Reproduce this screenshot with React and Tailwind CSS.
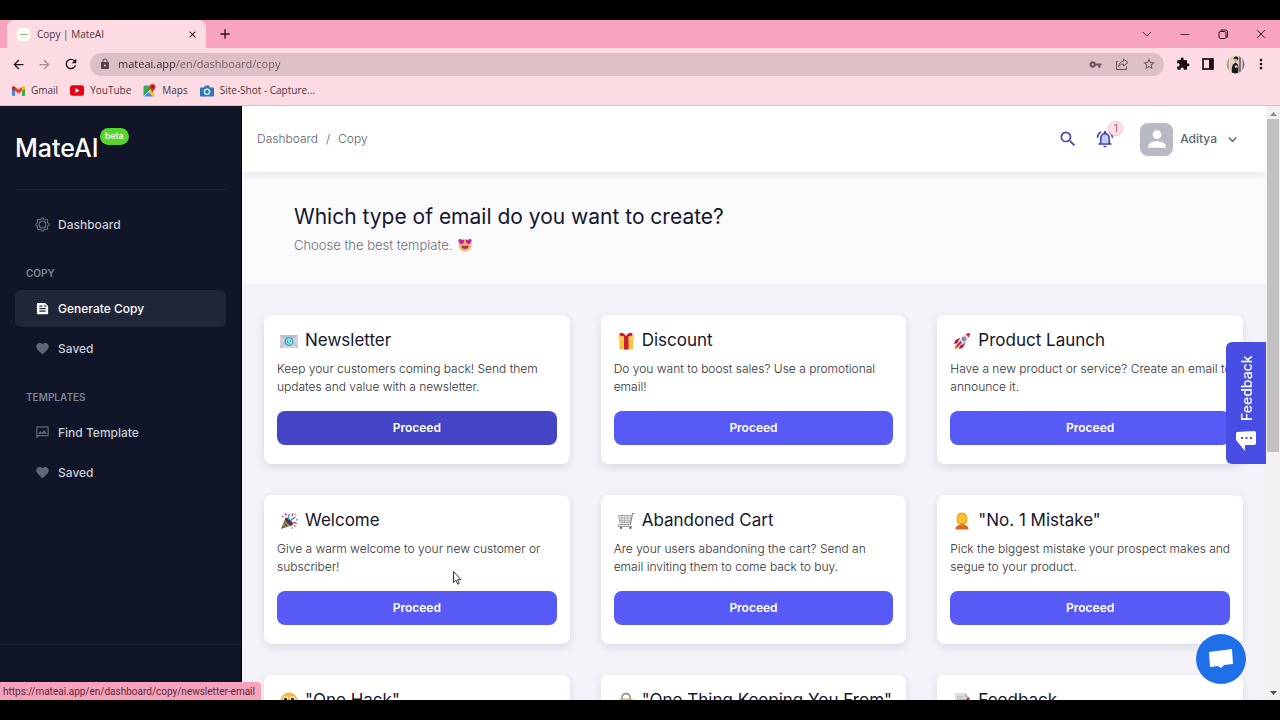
import React from "react";
import {
  MdArrowBack, MdArrowForward, MdRefresh, MdLock, MdVpnKey, MdStarBorder, MdExtension, MdMoreVert,
  MdFeed, MdFavorite, MdOutlineMms, MdSearch, MdPerson,
  MdKeyboardArrowDown, MdClose, MdAdd,
} from "react-icons/md";

/* ---------- Browser icons ---------- */

const GmailIcon = () => (
  <svg className="h-[10px] w-[13px]" viewBox="0 0 26 20" aria-hidden="true">
    <path d="M0 3v15a2 2 0 0 0 2 2h4V9z" fill="#4285f4" />
    <path d="M26 3v15a2 2 0 0 1-2 2h-4V9z" fill="#34a853" />
    <path d="M20 2v8l6-4V3.500c0-3-3-4-5-2.500z" fill="#fbbc04" />
    <path d="M6 10V2l7 5 7-5v8l-7 5z" fill="#ea4335" />
    <path d="M0 3.500V6l6 4V2L5 1C3-.500 0 .500 0 3.500z" fill="#c5221f" />
  </svg>
);

const YoutubeIcon = () => (
  <svg className="h-[11px] w-[14px]" viewBox="0 0 28 22" aria-hidden="true">
    <rect width="28" height="21" y="0.500" rx="5" fill="#e60012" />
    <path d="M11 6l8 5-8 5z" fill="#fff" />
  </svg>
);

const MapsIcon = () => (
  <svg className="size-[13px]" viewBox="0 0 26 26" aria-hidden="true">
    <rect x="1" y="3" width="22" height="22" rx="3" fill="#e8eaed" />
    <path d="M1 6a3 3 0 0 1 3-3h9L1 16z" fill="#34a853" />
    <path d="M1 16L13 3l3 6L1 24z" fill="#2f9e4f" />
    <path d="M2 25l9-9 9 9z" fill="#4285f4" />
    <path d="M11 16l4-4 8 9v4h-3z" fill="#fbbc04" />
    <path d="M19 0a6 6 0 0 0-6 6c0 5 5 6 6 12 1-6 6-7 6-12a6 6 0 0 0-6-6z" fill="#d93025" />
    <circle cx="19" cy="6" r="2.200" fill="#7b1711" />
  </svg>
);

const CameraIcon = () => (
  <svg className="h-[12px] w-[14px]" viewBox="0 0 28 24" aria-hidden="true">
    <path d="M2 5h6l2-4h8l2 4h6a2 2 0 0 1 2 2v14a2 2 0 0 1-2 2H2a2 2 0 0 1-2-2V7a2 2 0 0 1 2-2z" fill="#2f78b7" />
    <circle cx="14" cy="13.500" r="6.500" fill="#e7f1f8" />
    <circle cx="14" cy="13.500" r="3.800" fill="#2f78b7" />
  </svg>
);

const ShareIcon = () => (
  <svg className="size-[14px]" viewBox="0 0 28 28" fill="none" stroke="currentColor" strokeWidth="2" strokeLinejoin="round" aria-hidden="true">
    <path d="M6 9H3v16h20v-6" />
    <path d="M17 4l9 7-9 7v-4c-5 0-8 2-10 5 1-6 4-10 10-11z" />
  </svg>
);

const SidePanelIcon = () => (
  <svg className="size-[12px]" viewBox="0 0 12 12" aria-hidden="true">
    <rect x="1" y="1" width="10" height="10" fill="none" stroke="#1c1014" strokeWidth="1.700" />
    <rect x="7" y="1" width="4" height="10" fill="#1c1014" />
  </svg>
);

const ProfilePhoto = () => (
  <svg className="size-[19px]" viewBox="0 0 38 38" aria-hidden="true">
    <defs>
      <clipPath id="photo"><circle cx="19" cy="19" r="18" /></clipPath>
    </defs>
    <g clipPath="url(#photo)">
      <rect width="38" height="38" fill="#e2d3c2" />
      <rect x="26" width="12" height="38" fill="#85707a" />
      <rect x="30" width="3" height="38" fill="#e5dcd8" />
      <rect width="6" height="38" fill="#b9a391" />
      <path d="M12 38c-1-8-1-14 2-19l5-4 4 3c3 5 2 10 1 20z" fill="#1b1820" />
      <circle cx="20" cy="9" r="4.500" fill="#d3a78f" />
      <path d="M15 8c0-6 8-7 10-1l-1 3c-2-3-5-3-9-2z" fill="#18120f" />
      <path d="M17 22l5-2 2 5-5 1z" fill="#e6cbbd" />
    </g>
  </svg>
);

/* ---------- Dashboard icons ---------- */

const gearPath = Array.from({ length: 64 }, (_, i) => {
  const a = (i / 64) * Math.PI * 2;
  const r = 9.6 + Math.cos(a * 8) * 1.3;
  return `${i ? "L" : "M"}${(12 + r * Math.sin(a)).toFixed(2)} ${(12 - r * Math.cos(a)).toFixed(2)}`;
}).join("") + "Z";

const GearIcon = ({ className }) => (
  <svg className={className} viewBox="0 0 24 24" fill="none" stroke="currentColor" aria-hidden="true">
    <path d={gearPath} strokeWidth="1.900" strokeLinejoin="round" />
    <circle cx="12" cy="12" r="5.400" strokeWidth="2.200" />
  </svg>
);

const BellIcon = () => (
  <svg className="size-5" viewBox="0 0 24 24" aria-hidden="true">
    <path d="M12 6.500c-2.500 0-4 2-4 4.500v6h8v-6c0-2.500-1.500-4.500-4-4.500z" fill="#c3cdfb" />
    <path
      fill="currentColor"
      d="M12 22c1.100 0 2-.9 2-2h-4c0 1.100.9 2 2 2zm6-6v-5c0-3.070-1.630-5.640-4.500-6.320V4c0-.83-.67-1.500-1.500-1.500s-1.500.67-1.500 1.500v.68C7.640 5.360 6 7.920 6 11v5l-2 2v1h16v-1l-2-2zm-2 1H8v-6c0-2.480 1.510-4.500 4-4.500s4 2.020 4 4.500v6zM7.580 4.080L6.150 2.650C3.750 4.480 2.170 7.300 2.030 10.500h2c.15-2.650 1.510-4.970 3.550-6.420zm12.390 6.420h2c-.15-3.200-1.730-6.020-4.120-7.850l-1.420 1.430c2.020 1.450 3.390 3.770 3.540 6.420z"
    />
  </svg>
);

/* ---------- Emoji drawings ---------- */

const Emoji = ({ children, className = "size-[18px]" }) => (
  <svg className={`shrink-0 ${className}`} viewBox="0 0 36 36" aria-hidden="true">{children}</svg>
);

const HeartEyes = () => (
  <Emoji className="size-[14px]">
    <circle cx="18" cy="19" r="16" fill="#f7b072" />
    <path d="M1 5c2-4 7-3 8 0 3-3 8-1 7 4-1 4-4 6-7 7C4 14 0 10 1 5z" fill="#c8229a" />
    <path d="M35 5c-2-4-7-3-8 0-3-3-8-1-7 4 1 4 4 6 7 7 5-2 9-6 8-11z" fill="#c8229a" />
    <path d="M9 20h18c0 6-4 8-9 8s-9-2-9-8z" fill="#9a3a5e" />
  </Emoji>
);

const MailEmoji = () => (
  <Emoji>
    <rect x="0" y="6" width="36" height="26" fill="#d5cfe0" />
    <path d="M0 6l18 15L36 6z" fill="#bfb8d2" />
    <path d="M0 32l13-15M36 32L23 17" stroke="#aaa3bf" strokeWidth="1.500" />
    <circle cx="18" cy="19" r="9" fill="#27b3c4" />
    <circle cx="18" cy="19" r="5.500" fill="none" stroke="#b8eef0" strokeWidth="2" />
    <path d="M18 14v7h4" fill="none" stroke="#e9ffff" strokeWidth="2" />
  </Emoji>
);

const GiftEmoji = () => (
  <Emoji>
    <rect x="5" y="13" width="27" height="22" fill="#f8c33c" />
    <rect x="3" y="7" width="31" height="9" rx="1" fill="#fbd45c" />
    <rect x="14" y="8" width="9" height="27" fill="#c8202f" />
    <path d="M18 8C12-2 3 1 5 6c1 3 7 3 13 2zM18 8c6-10 15-7 13-2-1 3-7 3-13 2z" fill="#d92535" />
    <path d="M9 4l5 3M27 4l-5 3" stroke="#8f1422" strokeWidth="2" />
  </Emoji>
);

const RocketEmoji = () => (
  <Emoji>
    <path d="M14 11L4 17l-2 7 9-2zM25 22l-6 10-7 2 2-9z" fill="#b5214f" />
    <path d="M3 34c0-5 2-8 6-9l3 3c-1 4-4 6-9 6z" fill="#f28b3c" />
    <path d="M8 25C12 12 22 2 34 2c0 12-10 22-23 26z" fill="#e3dfe8" />
    <path d="M34 2c0 3-1 6-2 9l-7-7c3-1 6-2 9-2z" fill="#c6285a" />
    <path d="M8 25l3 3c8-2 14-6 18-12L13 27z" fill="#b9b3c4" />
    <circle cx="22" cy="14" r="3.800" fill="#8d93ab" stroke="#5a6078" strokeWidth="1.200" />
    <path d="M6 27l9-9 3 3-9 9z" fill="#c6285a" />
  </Emoji>
);

const PartyEmoji = () => (
  <Emoji>
    <path d="M11 12L2 34l23-8z" fill="#6b5a50" />
    <path d="M9 18l9 10M6 24l6 7M11 12l14 14" stroke="#c9a46a" strokeWidth="2.200" />
    <ellipse cx="18" cy="19" rx="4" ry="10" transform="rotate(-45 18 19)" fill="#4b3a44" />
    <path d="M17 16c-2-5 0-8 2-12M21 19c2-6 5-7 10-9" fill="none" stroke="#3b8fd0" strokeWidth="2.600" />
    <path d="M23 22c4-2 7-1 11 1" fill="none" stroke="#d0336b" strokeWidth="2.600" />
    <path d="M10 3l3 4M26 3l-2 5M4 8l3 2M31 29l-3-2" stroke="#cf3b8a" strokeWidth="3" />
    <path d="M32 16l3-1M23 31l2 2" stroke="#2fa4c9" strokeWidth="3" />
    <circle cx="31" cy="5" r="1.800" fill="#e0a030" />
  </Emoji>
);

const CartEmoji = () => (
  <Emoji>
    <path d="M35 3h-4l-4 22H6" fill="none" stroke="#8a8a90" strokeWidth="2.300" />
    <path d="M3 7h26l-3 14H6z" fill="#ededf0" stroke="#929299" strokeWidth="1.600" />
    <path d="M9 7l1 14M15 7v14M21 7l-1 14M4 12h24M5 17h22" stroke="#9d9da4" strokeWidth="1.300" />
    <path d="M5 25c-3 0-3 4 0 4h25" fill="none" stroke="#929299" strokeWidth="2.200" />
    <circle cx="8" cy="32" r="2.300" fill="#66666c" />
    <circle cx="27" cy="32" r="2.300" fill="#66666c" />
  </Emoji>
);

const PersonEmoji = () => (
  <Emoji>
    <path d="M5 35c0-7 5-10 13-10s13 3 13 10z" fill="#e2651f" />
    <path d="M18 1C9 1 7 8 7 15c0 5 2 8 5 10h12c3-2 5-5 5-10C29 8 27 1 18 1z" fill="#f3ac27" />
    <path d="M14 21h8v6c-2 3-6 3-8 0z" fill="#d98c1e" />
    <ellipse cx="18" cy="14" rx="7.500" ry="9" fill="#fac036" />
  </Emoji>
);

const FaceEmoji = () => (
  <Emoji>
    <circle cx="18" cy="18" r="17" fill="#f6b73c" />
    <ellipse cx="11" cy="14" rx="5" ry="5.500" fill="#fff" />
    <ellipse cx="25" cy="14" rx="5" ry="5.500" fill="#fff" />
    <circle cx="11" cy="14" r="3.200" fill="#3b2a20" />
    <circle cx="25" cy="14" r="3.200" fill="#3b2a20" />
    <path d="M10 27h16" stroke="#6b3c18" strokeWidth="2.500" />
  </Emoji>
);

const LockEmoji = () => (
  <Emoji>
    <path d="M10 18v-7a8 8 0 0 1 16 0v7" fill="none" stroke="#93939a" strokeWidth="3.500" />
    <rect x="4" y="13" width="28" height="21" rx="3" fill="#f6b73c" />
    <circle cx="18" cy="20" r="3" fill="#6b4a1c" />
    <path d="M18 21v7" stroke="#6b4a1c" strokeWidth="3" />
  </Emoji>
);

const NoteEmoji = () => (
  <Emoji>
    <path d="M4 2h20l7 8v25H4z" fill="#dcdbe1" />
    <path d="M24 2v8h7z" fill="#b4b3bd" />
    <path d="M8 10h12M8 15h17M8 20h12M8 25h10" stroke="#a5a4b0" strokeWidth="1.500" />
    <path d="M34 13l-4-3-12 15-1 6 6-2z" fill="#c92a4b" />
  </Emoji>
);

/* ---------- Data ---------- */

const cards = [
  { title: "Newsletter", icon: MailEmoji, text: "Keep your customers coming back! Send them updates and value with a newsletter.", hovered: true },
  { title: "Discount", icon: GiftEmoji, text: "Do you want to boost sales? Use a promotional email!" },
  { title: "Product Launch", icon: RocketEmoji, text: "Have a new product or service? Create an email to announce it." },
  { title: "Welcome", icon: PartyEmoji, text: "Give a warm welcome to your new customer or subscriber!" },
  { title: "Abandoned Cart", icon: CartEmoji, text: "Are your users abandoning the cart? Send an email inviting them to come back to buy." },
  { title: "\"No. 1 Mistake\"", icon: PersonEmoji, text: "Pick the biggest mistake your prospect makes and segue to your product." },
  { title: "\"One Hack\"", icon: FaceEmoji },
  { title: "\"One Thing Keeping You From\"", icon: LockEmoji },
  { title: "Feedback", icon: NoteEmoji },
];

const bookmarks = [
  { label: "Gmail", icon: GmailIcon },
  { label: "YouTube", icon: YoutubeIcon },
  { label: "Maps", icon: MapsIcon },
  { label: "Site-Shot - Capture...", icon: CameraIcon },
];

/* ---------- Browser frame ---------- */

function TabStrip() {
  return (
    <div className="flex h-7 shrink-0 items-stretch bg-[#f8a4c0] pl-[7px] text-[#2a1218]">
      <div className="flex w-[199px] items-center gap-[7px] rounded-t-lg bg-[#fcdbe2] pr-2 pl-[10px]">
        <span className="flex size-[13px] items-center justify-center rounded-sm bg-[#f6fdf3]">
          <span className="h-px w-2 bg-[#9bb59b]" />
        </span>
        <span className="flex-1 text-[10px] text-[#4a343b]">Copy | MateAI</span>
        <button aria-label="Close tab"><MdClose className="size-[11px]" /></button>
      </div>
      <button aria-label="New tab" className="ml-[11px]"><MdAdd className="size-4" /></button>
      <div className="ml-auto flex items-center gap-[26px] pr-[13px]">
        <button aria-label="Search tabs">
          <svg className="size-3" viewBox="0 0 12 12" fill="none" stroke="currentColor" strokeWidth="0.800"><path d="M2 4l4 4 4-4" /></svg>
        </button>
        <button aria-label="Minimize">
          <svg className="size-3" viewBox="0 0 12 12" fill="none" stroke="currentColor" strokeWidth="0.800"><path d="M1.500 6.500h9" /></svg>
        </button>
        <button aria-label="Restore">
          <svg className="size-3" viewBox="0 0 12 12" fill="none" stroke="currentColor"><rect x="2" y="3.500" width="7" height="7" rx="1.500" /><path d="M4 3.500V2h4.500a2 2 0 0 1 2 2v5H9" /></svg>
        </button>
        <button aria-label="Close window">
          <svg className="size-3" viewBox="0 0 12 12" fill="none" stroke="currentColor"><path d="M2 2l8 8M10 2l-8 8" /></svg>
        </button>
      </div>
    </div>
  );
}

function Toolbar() {
  return (
    <div className="flex h-8 shrink-0 items-center bg-[#fcdbe2] px-[11px] text-[#1c1014]">
      <div className="flex items-center gap-[11px]">
        <button aria-label="Back"><MdArrowBack className="size-[15px]" /></button>
        <button aria-label="Forward" className="text-[#a98790]"><MdArrowForward className="size-[15px]" /></button>
        <button aria-label="Reload"><MdRefresh className="size-4" /></button>
      </div>
      <div className="ml-[11px] flex h-[23px] flex-1 items-center rounded-full bg-[#dcc0c6] pr-2 pl-[9px] text-[#6b555b]">
        <MdLock className="size-3 text-[#55454a]" />
        <input
          aria-label="Address"
          readOnly
          value="mateai.app/en/dashboard/copy"
          className="ml-[7px] min-w-0 flex-1 bg-linear-to-r from-[#35282c] from-[58px] to-[#6f5c62] to-[58px] bg-clip-text text-[11px] text-transparent outline-none"
        />
        <div className="flex items-center gap-[13px]">
          <MdVpnKey className="size-[13px]" />
          <ShareIcon />
          <MdStarBorder className="size-[14px]" />
        </div>
      </div>
      <div className="ml-3 flex items-center gap-3">
        <MdExtension className="size-[14px]" />
        <SidePanelIcon />
        <ProfilePhoto />
        <button aria-label="Browser menu" className="-ml-1"><MdMoreVert className="size-4" /></button>
      </div>
    </div>
  );
}

function BookmarksBar() {
  return (
    <nav aria-label="Bookmarks" className="flex h-[26px] shrink-0 items-center gap-3 border-b border-[#d9bcc4] bg-[#fcdbe2] pb-1 pl-3 text-[10px] text-[#4a343b]">
      {bookmarks.map(({ label, icon: Icon }) => (
        <a key={label} href="#" className="flex items-center gap-[6px]">
          <Icon />
          {label}
        </a>
      ))}
    </nav>
  );
}

/* ---------- Dashboard ---------- */

function NavItem({ icon: Icon, label, active }) {
  return (
    <a
      href="#"
      className={`flex h-[37px] items-center gap-2 rounded-md pl-5 text-[12px] font-medium ${active ? "bg-[#1f2638] text-white" : "text-[#c9cdd8]"}`}
    >
      <Icon className={`size-[15px] ${active ? "text-white" : "text-[#5f6677]"}`} />
      {label}
    </a>
  );
}

const NavLabel = ({ children }) => (
  <h2 className="flex h-[47px] items-center pt-[14px] pl-[11px] text-[10px] font-semibold text-[#7d8393]">{children}</h2>
);

function Sidebar() {
  return (
    <aside className="flex w-[242px] shrink-0 flex-col border-r border-black bg-[#101627] pb-[55px]">
      <div className="mx-[15px] flex h-[84px] items-center border-b border-[#1d2538]">
        <div className="flex items-start gap-px">
          <span className="text-[25px] leading-8 font-medium text-white">MateAI</span>
          <span className="-mt-1 flex h-[17px] items-center rounded-full bg-[#55d42c] px-[5px] text-[9px] font-medium text-white">beta</span>
        </div>
      </div>
      <nav aria-label="Main" className="flex-1 border-b border-[#1a2236] px-[15px] pt-4">
        <NavItem icon={GearIcon} label="Dashboard" />
        <NavLabel>COPY</NavLabel>
        <div className="flex flex-col gap-[3px]">
          <NavItem icon={MdFeed} label="Generate Copy" active />
          <NavItem icon={MdFavorite} label="Saved" />
        </div>
        <NavLabel>TEMPLATES</NavLabel>
        <div className="flex flex-col gap-[3px]">
          <NavItem icon={MdOutlineMms} label="Find Template" />
          <NavItem icon={MdFavorite} label="Saved" />
        </div>
      </nav>
    </aside>
  );
}

function Header() {
  return (
    <header className="relative z-10 flex h-[66px] shrink-0 items-center justify-between bg-white pr-[25px] pl-[15px] shadow-[0_2px_8px_rgba(30,30,60,0.10)]">
      <nav aria-label="Breadcrumb" className="flex gap-2 text-[12px] font-light text-[#5c606a]">
        <a href="#">Dashboard</a>
        <span>/</span>
        <a href="#">Copy</a>
      </nav>
      <div className="flex items-center">
        <button aria-label="Search" className="text-[#4840bb]"><MdSearch className="size-5" /></button>
        <button aria-label="Notifications" className="relative ml-[17px] text-[#4840bb]">
          <BellIcon />
          <span className="absolute -top-2 -right-2 flex size-[15px] items-center justify-center rounded-full border border-[#f3b9c6] bg-[#fde3e9] text-[10px] text-[#c4436a]">1</span>
        </button>
        <button className="ml-[25px] flex items-center gap-[7px] text-[12px] font-medium text-[#5d6272]">
          <span className="flex size-[33px] items-center justify-center rounded-lg bg-[#b8bac3]">
            <MdPerson className="size-[26px] text-white" />
          </span>
          Aditya
          <MdKeyboardArrowDown className="size-[17px]" />
        </button>
      </div>
    </header>
  );
}

function Card({ title, icon: Icon, text, hovered }) {
  return (
    <article className="rounded-lg bg-white pt-[14px] pb-[19px] shadow-[0_3px_8px_rgba(30,30,60,0.12)]">
      <h2 className="flex h-6 items-center gap-[7px] pl-4 text-[17px] whitespace-nowrap text-[#15162b]">
        <Icon />
        {title}
      </h2>
      {text && (
        <>
          <p className="mt-[7px] h-9 pr-[10px] pl-[13px] text-[12px] leading-[18px] font-light text-[#303036]">{text}</p>
          <div className="mt-[15px] px-[13px]">
            <button className={`h-[34px] w-full rounded-lg text-[12px] font-semibold text-white ${hovered ? "bg-[#4444c6]" : "bg-[#575af5]"}`}>
              Proceed
            </button>
          </div>
        </>
      )}
    </article>
  );
}

function ScrollBar() {
  return (
    <div aria-hidden="true" className="flex w-[14px] shrink-0 flex-col items-center justify-between bg-[#f1f1f1] pb-1">
      <div className="flex w-full flex-1 flex-col items-center">
        <svg className="mt-[5px] mb-[3px] h-[5px] w-[7px]" viewBox="0 0 7 5"><path d="M0 5l3.500-4L7 5z" fill="#8b8b8b" /></svg>
        <div className="h-[57%] w-3 bg-[#c1c1c1]" />
      </div>
      <svg className="h-[5px] w-[7px]" viewBox="0 0 7 5"><path d="M0 0l3.500 4L7 0z" fill="#505050" /></svg>
    </div>
  );
}

export default function App() {
  return (
    <div className="flex h-screen flex-col overflow-hidden bg-black py-5 font-['Open_Sans',sans-serif]">
      <TabStrip />
      <Toolbar />
      <BookmarksBar />
      <div className="relative flex min-h-0 flex-1 overflow-hidden font-['Inter',sans-serif]">
        <Sidebar />
        <main className="flex min-w-0 flex-1 flex-col overflow-hidden bg-[#f3f3f9]">
          <Header />
          <section className="h-28 shrink-0 bg-[#fafafd] px-[52px] pt-[31px]">
            <h1 className="text-[21px] leading-7 text-[#15162b]">Which type of email do you want to create?</h1>
            <p className="mt-1 flex items-center gap-[6px] text-[13px] leading-5 font-light text-[#6c6f77]">
              Choose the best template. <HeartEyes />
            </p>
          </section>
          <section className="grid grid-cols-3 gap-[31px] pt-[31px] pr-[23px] pl-[22px]">
            {cards.map((card) => <Card key={card.title} {...card} />)}
          </section>
        </main>
        <ScrollBar />

        <button className="absolute top-[236px] right-[14px] z-20 flex h-[122px] w-10 rotate-180 items-center gap-[10px] rounded-r-md bg-[#484de3] pt-[13px] text-[14px] font-medium text-white [writing-mode:vertical-rl]">
          <svg className="size-5 rotate-180" viewBox="0 0 20 20" aria-hidden="true">
            <path d="M1 1l17-1a2 2 0 0 1 2 2v10a2 2 0 0 1-2 2h-9v6L0 9V2z" fill="#fff" />
            <path d="M5 6h2v2H5zM9.500 6h2v2h-2zM14 6h2v2h-2z" fill="#484de3" />
          </svg>
          Feedback
        </button>

        <button aria-label="Open chat" className="absolute right-[34px] bottom-4 z-20 flex size-[50px] items-center justify-center rounded-full bg-[#1f70e8]">
          <svg className="size-[26px]" viewBox="0 0 26 26" aria-hidden="true">
            <path d="M1 6l23-3 1 15-9 1-3 3-3-2-8 1z" fill="#fff" />
          </svg>
        </button>

        <div className="absolute bottom-0 left-0 z-20 flex h-[18px] items-center rounded-tr-sm bg-[#f5a2bc] pr-[6px] pl-[3px] font-['Roboto',sans-serif] text-[10px] text-[#5a2a3a]">
          https://mateai.app/en/dashboard/copy/newsletter-email
        </div>

        <svg className="absolute top-[465px] left-[453px] z-30 h-[14px] w-[9px]" viewBox="0 0 9 14" aria-hidden="true">
          <path d="M.500.500v11l2.500-2.300 1.700 4 1.600-.700-1.700-3.800h3.400z" fill="#fff" stroke="#222" strokeWidth="0.900" />
        </svg>
      </div>
    </div>
  );
}
